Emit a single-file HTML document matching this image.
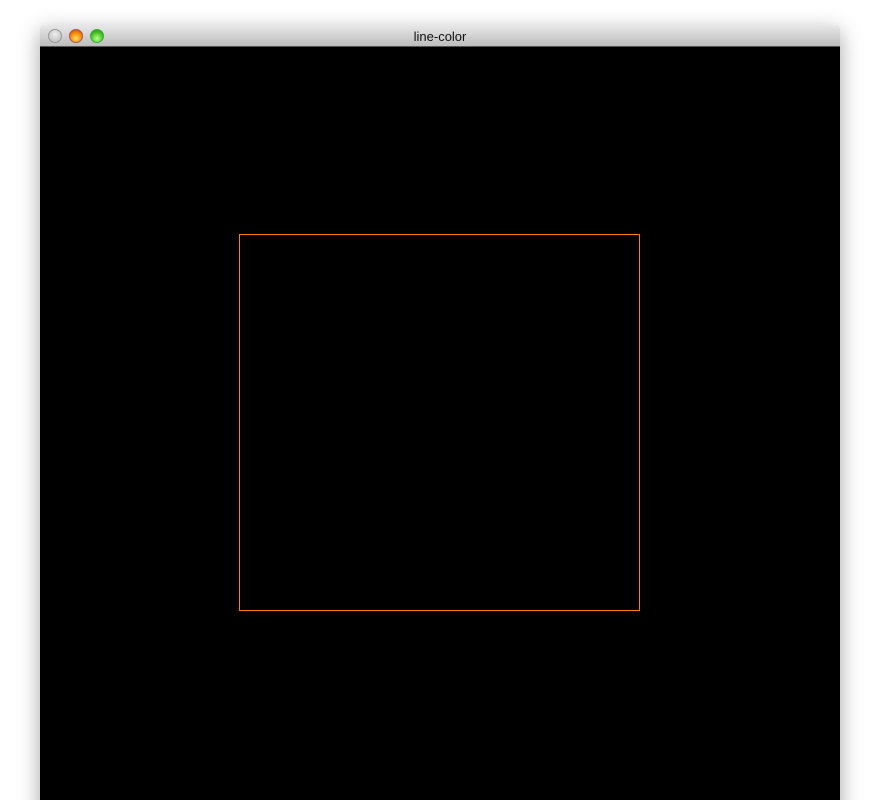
<!DOCTYPE html>
<html><head><meta charset="utf-8"><style>
html,body{margin:0;padding:0;background:#fff;width:880px;height:800px;overflow:hidden;position:relative}
.win{position:absolute;left:40px;top:25px;width:800px;height:800px;box-shadow:0 6px 22px rgba(0,0,0,0.35);border-radius:4px 4px 0 0}
.tb{position:absolute;left:0;top:0;width:800px;height:22px;background:linear-gradient(#e8e8e8,#bdbdbd);border-radius:4px 4px 0 0;border-bottom:1px solid #555;box-sizing:border-box}
.t{position:absolute;left:0;right:0;top:4px;text-align:center;font:13px "Liberation Sans",sans-serif;color:#111}
.b{position:absolute;top:4px;width:14px;height:14px;border-radius:50%;box-sizing:border-box}
.c{position:absolute;left:0;top:21px;width:800px;height:780px;background:#000}
.r{position:absolute;left:239px;top:234px;width:401px;height:377px;border:1px solid #ff7f00;box-sizing:border-box}
</style></head><body>
<div class="win">
<div class="c" style="top:21px"></div>
<div class="tb">
<div class="b" style="left:8px;background:radial-gradient(circle at 50% 35%,#eee,#b5b5b5);border:1px solid #999"></div>
<div class="b" style="left:29px;background:radial-gradient(circle at 50% 70%,#ffe060,#f08000 60%,#c04000);border:1px solid #a55"></div>
<div class="b" style="left:50px;background:radial-gradient(circle at 50% 70%,#b8ff90,#40c020 60%,#208010);border:1px solid #4a4"></div>
<div class="t">line-color</div>
</div>
</div>
<div class="r"></div>
</body></html>
